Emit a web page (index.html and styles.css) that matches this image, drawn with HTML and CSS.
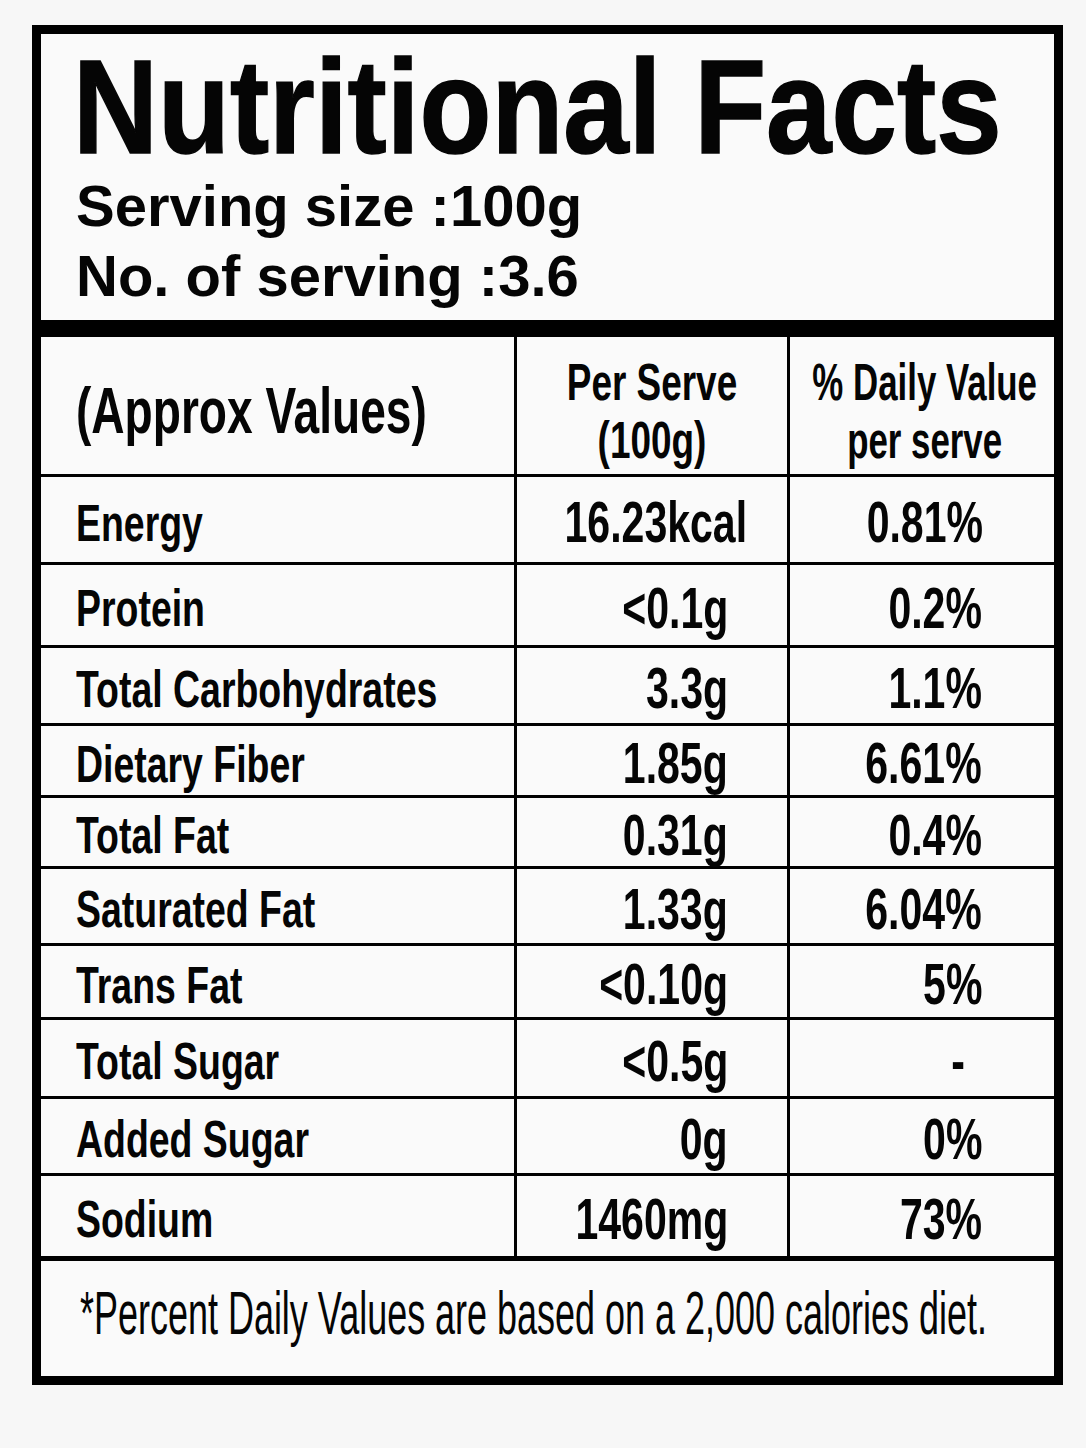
FILE: index.html
```html
<!DOCTYPE html>
<html lang="en">
<head>
<meta charset="utf-8">
<title>Nutritional Facts</title>
<link rel="stylesheet" href="styles.css">
</head>
<body>
<div class="label">
  <header class="head">
    <h1 class="title"><span class="sq">Nutritional Facts</span></h1>
    <p class="serv">Serving size :100g</p>
    <p class="serv">No. of serving :3.6</p>
  </header>
  <div class="table">
    <div class="row row-head">
      <div class="cell c-name"><span class="t big">(Approx Values)</span></div>
      <div class="cell c-qty"><span class="t two">Per Serve<br>(100g)</span></div>
      <div class="cell c-dv"><span class="t two tight">% Daily Value<br>per serve</span></div>
    </div>
    <div class="row r-energy">
      <div class="cell c-name"><span class="t">Energy</span></div>
      <div class="cell c-qty mid"><span class="t v">16.23kcal</span></div>
      <div class="cell c-dv mid"><span class="t v">0.81%</span></div>
    </div>
    <div class="row r-protein">
      <div class="cell c-name"><span class="t">Protein</span></div>
      <div class="cell c-qty"><span class="t v">&lt;0.1g</span></div>
      <div class="cell c-dv"><span class="t v">0.2%</span></div>
    </div>
    <div class="row r-carb">
      <div class="cell c-name"><span class="t">Total Carbohydrates</span></div>
      <div class="cell c-qty"><span class="t v">3.3g</span></div>
      <div class="cell c-dv"><span class="t v">1.1%</span></div>
    </div>
    <div class="row r-fiber">
      <div class="cell c-name"><span class="t">Dietary Fiber</span></div>
      <div class="cell c-qty"><span class="t v">1.85g</span></div>
      <div class="cell c-dv"><span class="t v">6.61%</span></div>
    </div>
    <div class="row r-fat">
      <div class="cell c-name"><span class="t">Total Fat</span></div>
      <div class="cell c-qty"><span class="t v">0.31g</span></div>
      <div class="cell c-dv"><span class="t v">0.4%</span></div>
    </div>
    <div class="row r-sat">
      <div class="cell c-name"><span class="t">Saturated Fat</span></div>
      <div class="cell c-qty"><span class="t v">1.33g</span></div>
      <div class="cell c-dv"><span class="t v">6.04%</span></div>
    </div>
    <div class="row r-trans">
      <div class="cell c-name"><span class="t">Trans Fat</span></div>
      <div class="cell c-qty"><span class="t v">&lt;0.10g</span></div>
      <div class="cell c-dv"><span class="t v">5%</span></div>
    </div>
    <div class="row r-sugar">
      <div class="cell c-name"><span class="t">Total Sugar</span></div>
      <div class="cell c-qty"><span class="t v">&lt;0.5g</span></div>
      <div class="cell c-dv dash"><span class="t v">-</span></div>
    </div>
    <div class="row r-added">
      <div class="cell c-name"><span class="t">Added Sugar</span></div>
      <div class="cell c-qty"><span class="t v">0g</span></div>
      <div class="cell c-dv"><span class="t v">0%</span></div>
    </div>
    <div class="row r-sodium">
      <div class="cell c-name"><span class="t">Sodium</span></div>
      <div class="cell c-qty"><span class="t v">1460mg</span></div>
      <div class="cell c-dv"><span class="t v">73%</span></div>
    </div>
  </div>
  <div class="note"><span class="nt">*Percent Daily Values are based on a 2,000 calories diet.</span></div>
</div>
</body>
</html>
```
FILE: styles.css
```css
html, body {
  margin: 0;
  padding: 0;
  background: #f7f7f7;
}

body {
  width: 1086px;
  height: 1448px;
  overflow: hidden;
  color: #050505;
  font-family: "Liberation Sans", Arial, sans-serif;
}

.label {
  box-sizing: border-box;
  width: 1031px;
  height: 1360px;
  margin: 25px 0 0 32px;
  border: 9px solid #000;
  background: #fafafa;
  display: flex;
  flex-direction: column;
}

/* ---------- heading block ---------- */
.head {
  box-sizing: border-box;
  height: 303px;
  padding: 9px 0 0 35px;
  border-bottom: 17px solid #000;
}

.title {
  margin: 0 0 0 -3px;
  height: 128px;
  font-family: "Liberation Sans", Arial, sans-serif;
  font-weight: 700;
  font-size: 133px;
  line-height: 128px;
  white-space: nowrap;
}

.sq {
  display: inline-block;
  transform: scaleX(0.885);
  transform-origin: left center;
  -webkit-text-stroke: 1.5px #050505;
}

.serv {
  margin: 0;
  font-weight: 700;
  font-size: 58px;
  line-height: 70px;
  white-space: nowrap;
}

/* ---------- table ---------- */
.table {
  display: flex;
  flex-direction: column;
}

.row {
  box-sizing: border-box;
  display: grid;
  grid-template-columns: 476px 273px minmax(0, 1fr);
  border-bottom: 3px solid #000;
}

.row-head { height: 140px; }
.r-energy { height: 88px; }
.r-protein { height: 83px; }
.r-carb { height: 78px; }
.r-fiber { height: 72px; }
.r-fat { height: 71px; }
.r-sat { height: 77px; }
.r-trans { height: 74px; }
.r-sugar { height: 79px; }
.r-added { height: 77px; }
.r-sodium { height: 80px; border-bottom: 0; }

.cell {
  box-sizing: border-box;
  min-width: 0;
  display: flex;
  align-items: center;
  padding-top: 6px;
  font-family: "Liberation Sans", Arial, sans-serif;
  font-weight: 700;
  font-size: 52px;
  line-height: 1;
  white-space: nowrap;
}

.c-name {
  border-right: 3px solid #000;
  padding-left: 35px;
}

.c-qty {
  border-right: 3px solid #000;
  justify-content: flex-end;
  padding-right: 59px;
}

.c-dv {
  justify-content: flex-end;
  padding-right: 72px;
}

.c-dv.dash { padding-right: 89px; }

.cell.mid {
  justify-content: center;
  padding-right: 0;
}

.c-qty.mid { padding-left: 8px; }
.c-dv.mid { padding-left: 6px; }

.t {
  display: inline-block;
  flex: none;
  transform: scaleX(0.72);
}

.v { font-size: 57px; }

.c-name .t { transform-origin: left center; }
.c-qty .t, .c-dv .t { transform-origin: right center; }
.mid .t { transform-origin: center center; }

.row-head .cell { padding-top: 10px; }

.big { font-size: 64px; }

.row-head .c-qty,
.row-head .c-dv {
  justify-content: center;
  padding-right: 0;
  padding-top: 11px;
}

.row-head .c-dv { padding-left: 6px; }

.row-head .two {
  text-align: center;
  line-height: 58px;
  transform: scaleX(0.71);
  transform-origin: center center;
}

.row-head .tight { transform: scaleX(0.67); }

/* ---------- footnote ---------- */
.note {
  box-sizing: border-box;
  flex: 1;
  border-top: 5px solid #000;
  display: flex;
  align-items: center;
  padding: 0 0 12px 39px;
  font-family: "Liberation Sans", Arial, sans-serif;
  font-weight: 400;
  font-size: 62px;
  line-height: 1;
  white-space: nowrap;
}

.nt {
  display: inline-block;
  transform: scaleX(0.58);
  transform-origin: left center;
}
```
